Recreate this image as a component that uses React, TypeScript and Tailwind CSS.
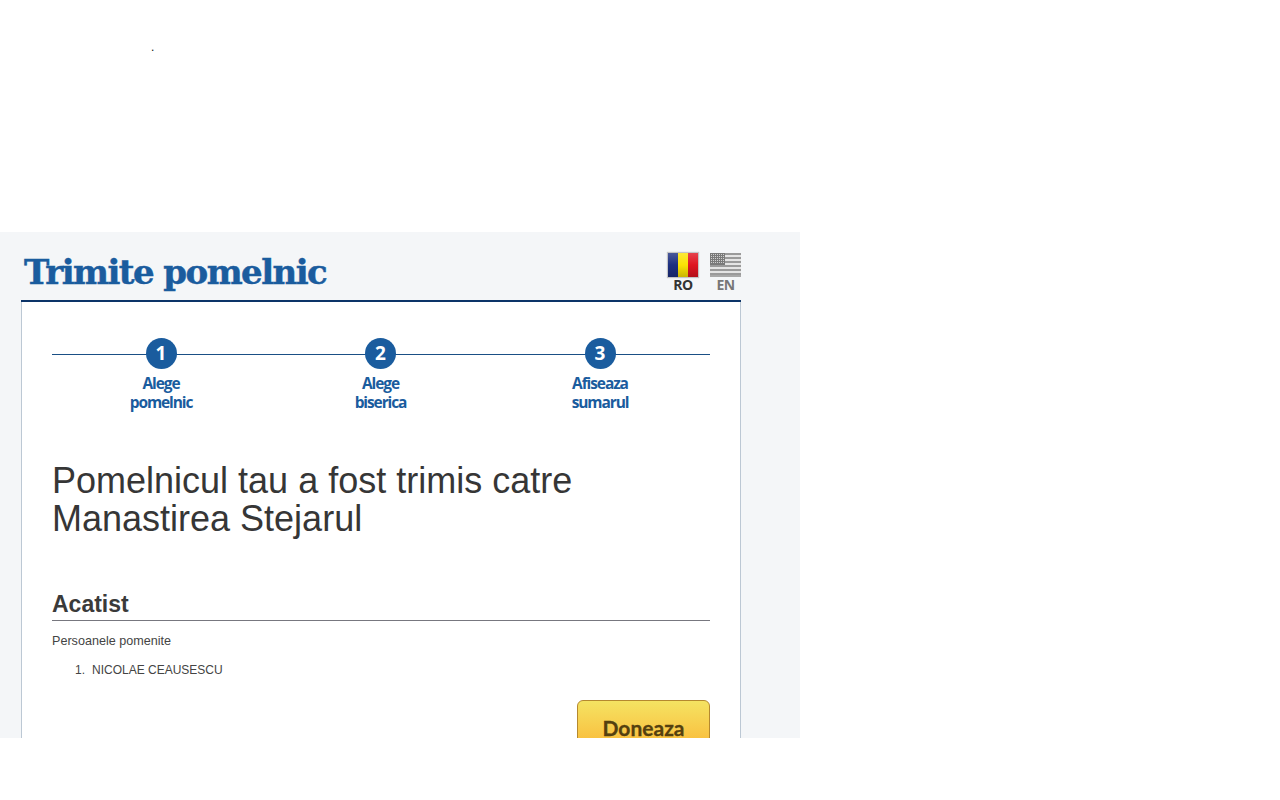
const flagShade = "bg-gradient-to-b from-white/20 via-transparent to-black/20";

function RoFlag() {
    return (
        <div className="relative flex h-[24px] w-[30px] shadow-[0_0_1px_1px_rgba(0,0,0,0.2)]">
            <div className="flex-1 bg-[#1c2f80]" />
            <div className="flex-1 bg-[#fbe204]" />
            <div className="flex-1 bg-[#df1420]" />
            <div className={`absolute inset-0 ${flagShade}`} />
        </div>
    );
}

function UsFlag() {
    return (
        <svg width="31" height="24" viewBox="0 0 31 24" className="block">
            <rect width="31" height="24" fill="#e4e4e4" />
            {[0, 4, 8, 12, 16, 20].map(y => (
                <rect key={y} y={y} width="31" height="2" fill="#9a9a9a" />
            ))}
            <rect y="22" width="31" height="2" fill="#a8a8a8" />
            <rect width="15" height="12" fill="#7a7a7a" />
            {[1, 3, 5, 7, 9].map(y =>
                [1, 3, 5, 7, 9, 11, 13].map(x => (
                    <rect key={`${x}-${y}`} x={x} y={y} width="1" height="1" fill="#cfcfcf" />
                ))
            )}
        </svg>
    );
}

function Step({ n, top, bottom }: { n: number; top: string; bottom: string }) {
    return (
        <div className="flex w-[110px] flex-col items-center">
            <div className="flex h-[31px] w-[31px] items-center justify-center rounded-full bg-[#1a5c9e] font-['Open_Sans',sans-serif] text-[19px] font-bold text-white">
                {n}
            </div>
            <div className="mt-[5px] text-center font-['Open_Sans',sans-serif] text-[15.5px] leading-[19px] font-bold tracking-[-1.1px] text-[#1a5c9e]">
                {top}
                <br />
                {bottom}
            </div>
        </div>
    );
}

export default function App() {
    return (
        <div className="h-[800px] w-[1280px] overflow-hidden bg-white font-['Liberation_Sans',sans-serif]">
            <div className="h-[232px] pt-[38px] pl-[151px] text-[12px] leading-[18px] text-[#111]">.</div>
            <div className="h-[506px] w-[800px] overflow-hidden bg-[#f4f6f8] pl-[21px]">
                <div className="w-[720px]">
                    <div className="flex h-[70px] items-start justify-between border-b-2 border-[#0c3468]">
                        <h1 className="mt-[16px] ml-[3px] font-['DejaVu_Serif',serif] text-[34px] leading-[48px] font-bold tracking-[-1.55px] text-[#1a5c9e] [-webkit-text-stroke:0.5px_#1a5c9e]">
                            Trimite pomelnic
                        </h1>
                        <div className="mt-[21px] flex gap-[12px]">
                            <div className="flex flex-col items-center">
                                <RoFlag />
                                <span className="-mt-px font-['Open_Sans',sans-serif] text-[14px] leading-[18px] font-bold tracking-[-0.5px] text-[#333]">RO</span>
                            </div>
                            <div className="flex flex-col items-center">
                                <UsFlag />
                                <span className="-mt-px font-['Open_Sans',sans-serif] text-[14px] leading-[18px] font-bold tracking-[-0.5px] text-[#777]">EN</span>
                            </div>
                        </div>
                    </div>
                    <div className="h-[500px] border-x border-[#bcc8d4] bg-white px-[30px] pt-[36px]">
                        <div className="relative pr-[55px] pl-[54px]">
                            <div className="absolute top-[16px] right-0 left-0 h-px bg-[#1a4f85]" />
                            <div className="relative flex w-full justify-between">
                                <Step n={1} top="Alege" bottom="pomelnic" />
                                <Step n={2} top="Alege" bottom="biserica" />
                                <Step n={3} top="Afiseaza" bottom="sumarul" />
                            </div>
                        </div>
                        <h2 className="mt-[50px] text-[36px] leading-[38px] text-[#363636]">
                            Pomelnicul tau a fost trimis catre
                            <br />
                            Manastirea Stejarul
                        </h2>
                        <h3 className="mt-[51px] border-b border-[#77777f] pb-[1px] text-[23px] leading-[30px] font-bold text-[#3a3a3a]">Acatist</h3>
                        <p className="mt-[11px] text-[12.6px] leading-[18px] text-[#444]">Persoanele pomenite</p>
                        <ol className="mt-[11px] flex text-[12px] leading-[18px] text-[#444]">
                            <li className="flex pl-[23px]">
                                <span className="w-[17px]">1.</span>
                                <span>NICOLAE CEAUSESCU</span>
                            </li>
                        </ol>
                        <div className="mt-[21px] flex justify-end">
                            <button className="h-[70px] w-[133px] rounded-[6px] border border-[#b5892f] bg-gradient-to-b from-[#f4e362] to-[#faa61a] pb-[14px] font-['Lato',sans-serif] text-[21px] font-bold text-[#54400f] [-webkit-text-stroke:0.3px_#54400f]">
                                Doneaza
                            </button>
                        </div>
                    </div>
                </div>
            </div>
        </div>
    );
}
